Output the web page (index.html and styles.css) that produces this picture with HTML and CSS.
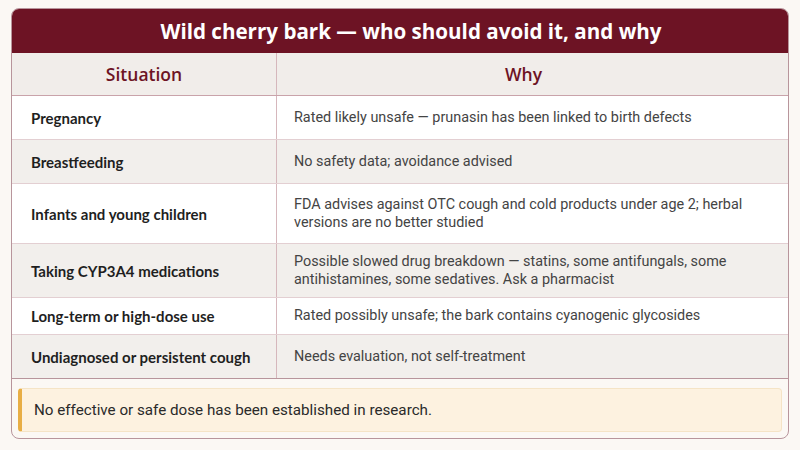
FILE: index.html
```html
<!DOCTYPE html>
<html lang="en">
<head>
<meta charset="utf-8">
<link rel="stylesheet" href="styles.css">
</head>
<body>
<div class="card">
  <div class="title">Wild cherry bark — who should avoid it, and why</div>
  <table class="tbl">
    <thead>
      <tr><th class="c1">Situation</th><th class="c2">Why</th></tr>
    </thead>
    <tbody>
      <tr class="r-a"><td class="lab">Pregnancy</td><td class="why">Rated likely unsafe — prunasin has been linked to birth defects</td></tr>
      <tr class="r-a alt"><td class="lab">Breastfeeding</td><td class="why">No safety data; avoidance advised</td></tr>
      <tr class="r-b"><td class="lab">Infants and young children</td><td class="why">FDA advises against OTC cough and cold products under age 2; herbal versions are no better studied</td></tr>
      <tr class="r-c alt"><td class="lab">Taking CYP3A4 medications</td><td class="why">Possible slowed drug breakdown — statins, some antifungals, some antihistamines, some sedatives. Ask a pharmacist</td></tr>
      <tr class="r-d"><td class="lab">Long-term or high-dose use</td><td class="why">Rated possibly unsafe; the bark contains cyanogenic glycosides</td></tr>
      <tr class="r-a alt"><td class="lab">Undiagnosed or persistent cough</td><td class="why">Needs evaluation, not self-treatment</td></tr>
    </tbody>
  </table>
  <div class="foot">
    <div class="note">No effective or safe dose has been established in research.</div>
  </div>
</div>
</body>
</html>
```
FILE: styles.css
```css
html, body {
  margin: 0;
  padding: 0;
  background: #fbf8f4;
}
body {
  padding: 8px 11px 0 11px;
  font-family: "Roboto", "Liberation Sans", sans-serif;
  color: #2a2a2a;
}
.card {
  border: 1px solid #b8959c;
  border-radius: 8px;
  overflow: hidden;
  background: #fbf8f4;
  height: 431px;
  box-sizing: border-box;
  display: flex;
  flex-direction: column;
}
.title {
  background: #6d1324;
  color: #ffffff;
  font-family: "Open Sans", sans-serif;
  font-weight: 700;
  font-size: 20.6px;
  height: 44px;
  line-height: 44px;
  text-align: center;
  padding-left: 22px;
}
.tbl {
  width: 100%;
  border-collapse: collapse;
  table-layout: fixed;
}
.tbl th {
  background: #f1edea;
  color: #6d1324;
  font-family: "Open Sans", sans-serif;
  font-weight: 600;
  font-size: 17.5px;
  height: 42px;
  padding: 0;
  border-bottom: 1px solid #c9a3aa;
}
.tbl th.c1 { width: 264px; border-right: 1px solid #d6b7bc; }
.tbl th.c2 { padding-right: 18px; }
.tbl td {
  padding: 0 17px;
  border-bottom: 1px solid #e3cfd2;
  vertical-align: middle;
  font-size: 14.4px;
  line-height: 18px;
}
.tbl td.lab {
  padding-left: 19px;
  padding-right: 8px;
  font-family: "Lato", sans-serif;
  font-weight: 700;
  font-size: 15px;
  color: #1f1f1f;
  border-right: 1px solid #d6b7bc;
}
.tbl td.why {
  color: #444444;
}
.tbl tr.alt td { background: #f2efec; }
.tbl tr:not(.alt) td { background: #ffffff; }
.r-a { height: 44px; }
.r-b { height: 60px; }
.r-c { height: 54px; }
.r-d { height: 37px; }
.tbl tbody tr:last-child td { border-bottom: 1px solid #b8959c; }
.foot {
  flex: 1;
  padding: 9px 6px 0 6px;
}
.note {
  background: #fdf2e0;
  border: 1px solid #f5e4c6;
  border-left: 4px solid #e8ae45;
  border-radius: 4px;
  height: 44px;
  box-sizing: border-box;
  padding-left: 12px;
  display: flex;
  align-items: center;
  font-size: 15.2px;
  color: #2a2a2a;
}
```
